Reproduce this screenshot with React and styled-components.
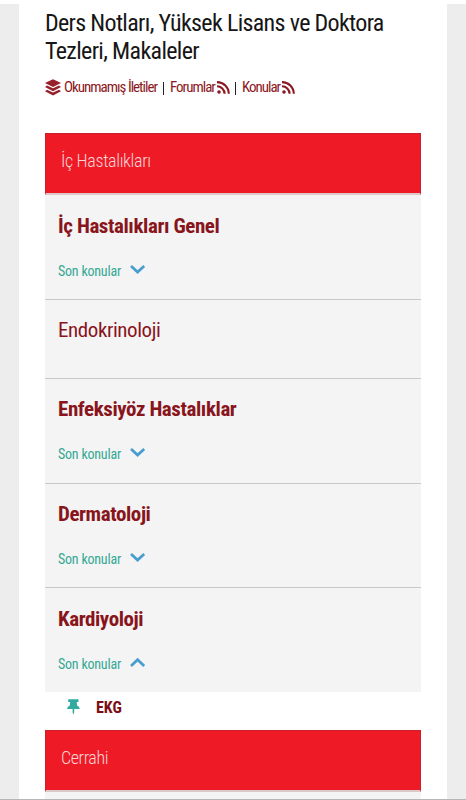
import React from "react";
import styled, { createGlobalStyle } from "styled-components";

const GlobalStyle = createGlobalStyle`
  * { box-sizing: border-box; }
  html, body { margin: 0; padding: 0; background: #fff; }
  body { height: 800px; overflow: hidden; font-family: "Roboto Condensed", Roboto, sans-serif; font-stretch: 75%; }
`;

const Page = styled.div`
  width: 466px;
  height: 800px;
  padding-top: 4px;
  background: #fff;
  border-bottom: 1px solid #b9b5b6;
  overflow: hidden;
`;

const Frame = styled.div`
  height: 795px;
  padding: 0 19px;
  background: #ededed;
`;

const Sheet = styled.main`
  height: 100%;
  padding: 5px 26px 0;
  background: #fff;
`;

const Text = styled.span`
  display: inline-block;
  flex: none;
  white-space: nowrap;
  letter-spacing: ${(p) => p.$ls || 0}px;
`;

const Title = styled.h1`
  margin: 0;
  height: 57px;
  font-size: 24px;
  line-height: 28.3px;
  font-weight: 370;
  color: #161616;
`;

const Links = styled.nav`
  display: flex;
  align-items: center;
  height: 22px;
  margin-top: 10px;
  font-size: 15px;
  line-height: 22px;
  font-weight: 370;
`;

const Link = styled.a`
  display: flex;
  align-items: center;
  gap: ${(p) => p.$gap || 2}px;
  color: #8c1822;
`;

const Divider = styled.i`
  width: 1px;
  height: 13px;
  margin: 2px 6px 0 ${(p) => p.$left}px;
  background: #222;
`;

const Forum = styled.section`
  width: 376px;
  margin-top: ${(p) => p.$top || 0}px;
`;

const ForumHeader = styled.h2`
  height: 62px;
  margin: 0;
  padding: 15px 0 0 15px;
  border: 1px solid #c91e2b;
  border-bottom: 2px solid #dcc9c8;
  background: #ee1b27;
  color: #fbd5d6;
  font-size: 18px;
  line-height: 24px;
  font-weight: 320;
`;

const Row = styled.article`
  height: ${(p) => p.$h}px;
  padding: ${(p) => p.$pad || 15}px 0 0 13px;
  background: #f4f4f4;
  border-bottom: ${(p) => (p.$last ? "0" : "1px solid #c8c8c8")};
`;

const RowTitle = styled.h3`
  margin: 0;
  height: 30px;
  font-size: 21px;
  line-height: 30px;
  font-weight: ${(p) => (p.$bold ? 700 : 380)};
  color: #89151c;
`;

const Recent = styled.div`
  display: flex;
  align-items: center;
  gap: 9px;
  height: 20px;
  margin-top: 20px;
  font-size: 14px;
  line-height: 20px;
  color: #35a894;
`;

const Topic = styled.div`
  display: flex;
  align-items: center;
  gap: 16px;
  height: 38px;
  padding: 0 0 8px 22px;
  font-size: 16px;
  font-weight: 700;
  color: #7c0f15;
`;

const Icon = styled.svg`
  display: block;
  flex: none;
`;

const Layers = () => (
  <Icon width="16" height="17" viewBox="0 0 16 17" fill="#96212b">
    <path d="M8 .2 16 4.1 8 8 0 4.1Z" />
    <path d="m0 8 2-1.4L8 9.2l6-2.6L16 8l-8 4.2Z" />
    <path d="m0 12.2 2-1.4 6 2.6 6-2.6 2 1.4-8 4.2Z" />
  </Icon>
);

const Rss = () => (
  <Icon width="13" height="13" viewBox="0 0 13 13" fill="none" stroke="#8c1822" strokeWidth="2.1">
    <circle cx="2" cy="11" r="1.8" fill="#8c1822" stroke="none" />
    <path d="M0 5.3A7.6 7.6 0 0 1 7.6 12.8M0 1.1A11.7 11.7 0 0 1 11.8 12.8" />
  </Icon>
);

const Chevron = ({ up }) => (
  <Icon width="16" height="14" viewBox="0 0 16 14" fill="none" stroke="#4a9dd0" strokeWidth="2.7">
    <path d={up ? "m1 8.9 6.6-6.2 6.6 6.2" : "m1 1.9 6.6 6.2 6.6-6.2"} />
  </Icon>
);

const Pin = () => (
  <Icon width="13" height="16" viewBox="0 0 13 16" fill="#32aaa0">
    <path d="M1.2.2h10.3v2.9H9.7l.5 3.6c1.6.6 2.5 1.6 2.5 3.3H7.2v3.6l-.8 2-.8-2V10H.2C.2 8.3 1.1 7.3 2.7 6.7l.5-3.6h-2Z" />
  </Icon>
);

const rows = [
  { title: "İç Hastalıkları Genel", h: 105, recent: true, bold: true, pad: 16 },
  { title: "Endokrinoloji", h: 79 },
  { title: "Enfeksiyöz Hastalıklar", h: 105, recent: true, bold: true },
  { title: "Dermatoloji", h: 104, recent: true, bold: true },
  { title: "Kardiyoloji", h: 104, recent: true, bold: true, open: true, pad: 16 },
];

export default function App() {
  return (
    <>
      <GlobalStyle />
      <Page>
        <Frame>
          <Sheet>
            <Title>
              <Text $ls={-0.67}>Ders Notları, Yüksek Lisans ve Doktora</Text>
              <br />
              <Text $ls={-0.65}>Tezleri, Makaleler</Text>
            </Title>
            <Links>
              <Link $gap={3}>
                <Layers />
                <Text $ls={-1}>Okunmamış İletiler</Text>
              </Link>
              <Divider $left={6} />
              <Link>
                <Text $ls={-1}>Forumlar</Text>
                <Rss />
              </Link>
              <Divider $left={5} />
              <Link>
                <Text $ls={-1}>Konular</Text>
                <Rss />
              </Link>
            </Links>
            <Forum $top={35}>
              <ForumHeader>
                <Text $ls={-0.34}>İç Hastalıkları</Text>
              </ForumHeader>
              {rows.map((r) => (
                <Row key={r.title} $h={r.h} $pad={r.pad} $last={r.open}>
                  <RowTitle $bold={r.bold}>
                    <Text $ls={-0.42}>{r.title}</Text>
                  </RowTitle>
                  {r.recent && (
                    <Recent>
                      <Text $ls={-0.22}>Son konular</Text>
                      <Chevron up={r.open} />
                    </Recent>
                  )}
                </Row>
              ))}
              <Topic>
                <Pin />
                <Text>EKG</Text>
              </Topic>
            </Forum>
            <Forum>
              <ForumHeader>
                <Text $ls={-0.4}>Cerrahi</Text>
              </ForumHeader>
              <Row $h={20} />
            </Forum>
          </Sheet>
        </Frame>
      </Page>
    </>
  );
}
